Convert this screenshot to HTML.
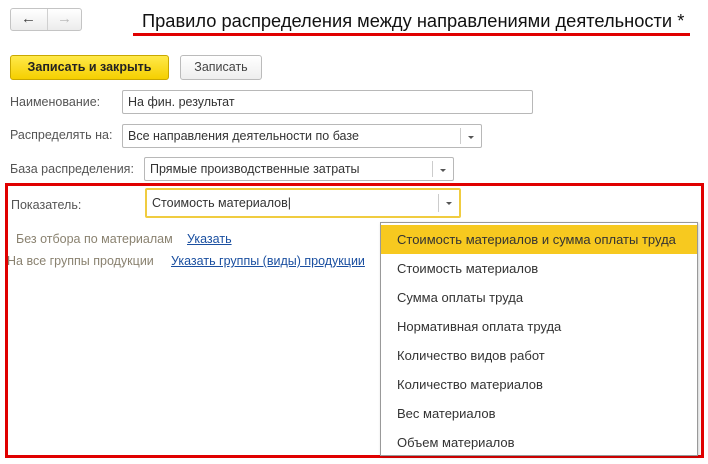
<!DOCTYPE html>
<html><head><meta charset="utf-8"><style>
body{margin:0;width:708px;height:464px;background:#fff;font-family:"Liberation Sans",Arial,sans-serif;font-size:12.5px;color:#333;position:relative;overflow:hidden}
.a{position:absolute}
.inp{position:absolute;border:1px solid #b8b8b8;border-radius:2px;background:#fff;box-sizing:border-box;padding-left:5px;line-height:22px;color:#333}
.dd{position:absolute;top:3px;bottom:3px;right:0;width:20px;border-left:1px solid #ccc}
.dd:after{content:"";position:absolute;left:7px;top:8px;border:3px solid transparent;border-top:3px solid #555}
.lbl{position:absolute;color:#555}
.it{position:absolute;left:16px;color:#333;font-size:13px}
a{color:#1a4fa0;text-decoration:underline}
</style></head><body>
<div class="a" style="left:10px;top:8px;width:72px;height:23px;border:1px solid #c4c4c4;border-radius:3px;box-sizing:border-box;background:linear-gradient(#fff,#ececec)"></div>
<div class="a" style="left:47px;top:9px;width:1px;height:21px;background:#d0d0d0"></div>
<div class="a" style="left:21px;top:10px;font-size:15px;color:#444;font-weight:bold">&#8592;</div>
<div class="a" style="left:57px;top:10px;font-size:15px;color:#bbb;font-weight:bold">&#8594;</div>
<div class="a" style="left:142px;top:10px;font-size:18.3px;color:#111;white-space:nowrap">Правило распределения между направлениями деятельности *</div>
<div class="a" style="left:133px;top:33px;width:557px;height:3px;background:#e00000"></div>
<div class="a" style="left:10px;top:55px;width:159px;height:25px;border:1px solid #c9a800;border-radius:3px;box-sizing:border-box;background:linear-gradient(#ffe94a,#f5cf00);font-weight:bold;color:#222;text-align:center;line-height:23px">Записать и закрыть</div>
<div class="a" style="left:180px;top:55px;width:82px;height:25px;border:1px solid #bbb;border-radius:3px;box-sizing:border-box;background:linear-gradient(#fff,#eee);color:#444;text-align:center;line-height:23px">Записать</div>
<div class="lbl" style="left:10px;top:95px">Наименование:</div>
<div class="inp" style="left:122px;top:90px;width:411px;height:24px">На фин. результат</div>
<div class="lbl" style="left:10px;top:128px">Распределять на:</div>
<div class="inp" style="left:122px;top:124px;width:360px;height:24px">Все направления деятельности по базе<div class="dd"></div></div>
<div class="lbl" style="left:10px;top:162px">База распределения:</div>
<div class="inp" style="left:144px;top:157px;width:310px;height:24px">Прямые производственные затраты<div class="dd"></div></div>
<div class="a" style="left:5px;top:183px;width:699px;height:275px;border:3px solid #e00000;box-sizing:border-box"></div>
<div class="lbl" style="left:11px;top:198px">Показатель:</div>
<div class="inp" style="left:145px;top:188px;width:316px;height:30px;border:2px solid #f0cc40;line-height:26px">Стоимость материалов|<div class="dd" style="top:4px;bottom:4px"></div></div>
<div class="lbl" style="left:16px;top:232px;color:#8a8270">Без отбора по материалам</div>
<a class="a" style="left:187px;top:232px">Указать</a>
<div class="lbl" style="left:7px;top:254px;color:#8a8270">На все группы продукции</div>
<a class="a" style="left:171px;top:254px">Указать группы (виды) продукции</a>
<div class="a" style="left:380px;top:222px;width:318px;height:234px;border:1px solid #999;box-sizing:border-box;background:#fff;box-shadow:1px 1px 3px rgba(0,0,0,.2)">
<div class="a" style="left:0;top:2px;width:316px;height:29px;background:#f7c91f"></div>
<div class="it" style="top:9px">Стоимость материалов и сумма оплаты труда</div>
<div class="it" style="top:38px">Стоимость материалов</div>
<div class="it" style="top:67px">Сумма оплаты труда</div>
<div class="it" style="top:96px">Нормативная оплата труда</div>
<div class="it" style="top:125px">Количество видов работ</div>
<div class="it" style="top:154px">Количество материалов</div>
<div class="it" style="top:183px">Вес материалов</div>
<div class="it" style="top:212px">Объем материалов</div>
</div>
</body></html>
